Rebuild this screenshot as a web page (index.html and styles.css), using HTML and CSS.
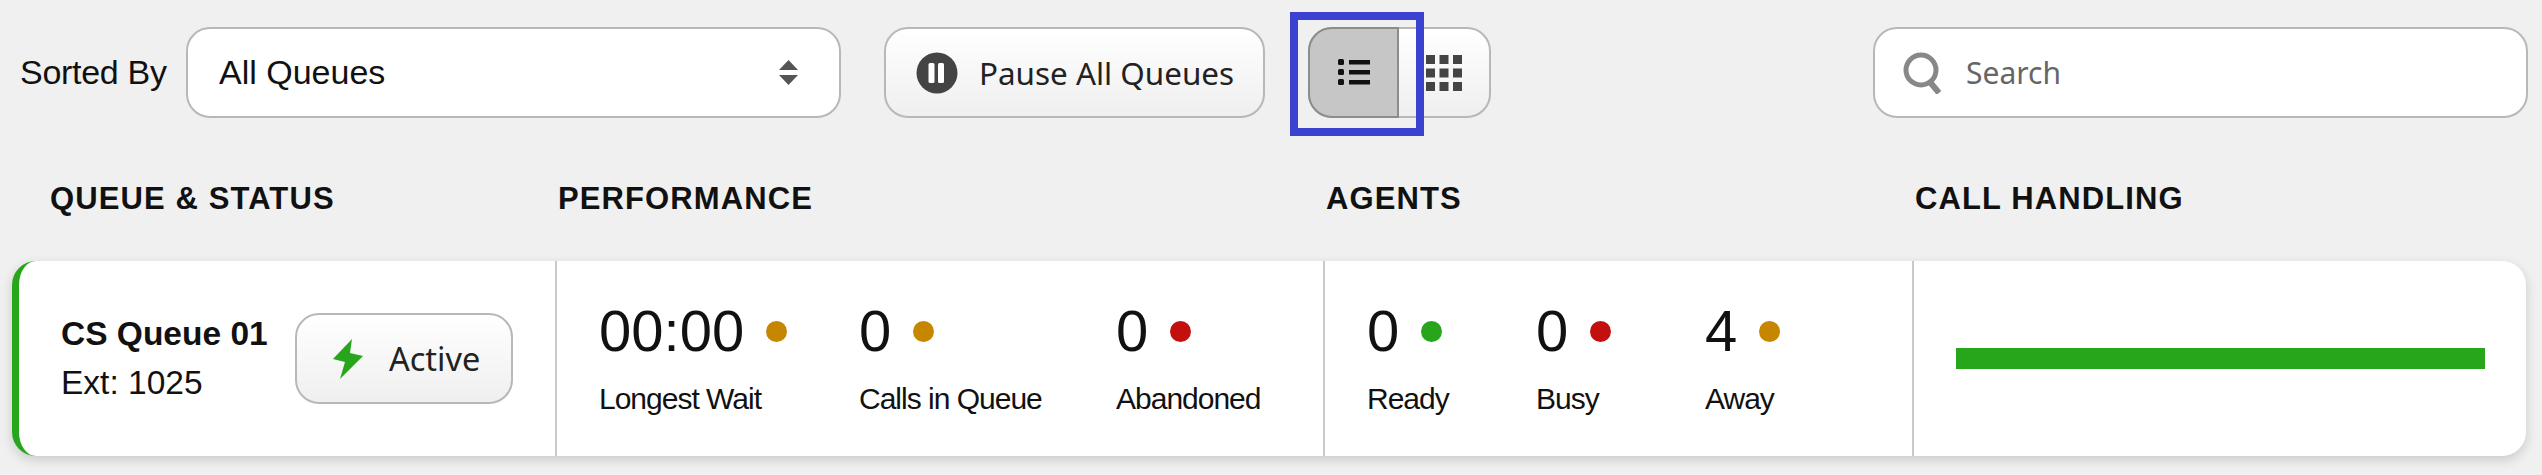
FILE: index.html
```html
<!DOCTYPE html>
<html lang="en">
<head>
<meta charset="utf-8">
<title>Queues</title>
<link rel="stylesheet" href="styles.css">
</head>
<body>
<div class="page">
  <div class="toolbar">
    <span class="sort-label">Sorted By</span>
    <div class="select">
      <span>All Queues</span>
      <svg class="updown" viewBox="0 0 19 25" width="19" height="25"><path d="M9.5 0 19 10H0Z" fill="#555"/><path d="M0 15H19L9.5 25Z" fill="#555"/></svg>
    </div>
    <button class="btn pause">
      <svg viewBox="0 0 42 42" width="42" height="42"><circle cx="21" cy="21" r="20.5" fill="#444"/><rect x="12.5" y="11" width="6" height="20" rx="1.5" fill="#fff"/><rect x="22" y="11" width="6" height="20" rx="1.5" fill="#fff"/></svg>
      <span>Pause All Queues</span>
    </button>
    <div class="toggle">
      <div class="seg seg-on">
        <svg viewBox="0 0 32 32" width="32" height="32"><g fill="#111"><rect x="0" y="2" width="6" height="6" rx="1.5"/><rect x="0" y="12" width="6" height="6" rx="1.5"/><rect x="0" y="22" width="6" height="6" rx="1.5"/><rect x="11" y="3" width="21" height="4.5"/><rect x="11" y="13" width="21" height="4.5"/><rect x="11" y="23" width="21" height="4.5"/></g></svg>
      </div>
      <div class="seg">
        <svg viewBox="0 0 36 36" width="36" height="36"><g fill="#444"><rect x="0" y="0" width="9" height="9"/><rect x="13.5" y="0" width="9" height="9"/><rect x="27" y="0" width="9" height="9"/><rect x="0" y="13.5" width="9" height="9"/><rect x="13.5" y="13.5" width="9" height="9"/><rect x="27" y="13.5" width="9" height="9"/><rect x="0" y="27" width="9" height="9"/><rect x="13.5" y="27" width="9" height="9"/><rect x="27" y="27" width="9" height="9"/></g></svg>
      </div>
      <div class="highlight"></div>
    </div>
    <div class="search">
      <svg viewBox="0 0 42 42" width="42" height="42"><circle cx="19" cy="18" r="15" fill="none" stroke="#888" stroke-width="5"/><path d="M28 30 37 41" stroke="#888" stroke-width="6" fill="none"/></svg>
      <span>Search</span>
    </div>
  </div>

  <div class="columns">
    <div class="col-head">QUEUE &amp; STATUS</div>
    <div class="col-head">PERFORMANCE</div>
    <div class="col-head">AGENTS</div>
    <div class="col-head">CALL HANDLING</div>
  </div>

  <div class="card columns">
    <div class="cell cell-queue">
      <div class="queue-name">
        <div class="name">CS Queue 01</div>
        <div class="ext">Ext: 1025</div>
      </div>
      <button class="btn active">
        <svg viewBox="0 0 30 40" width="30" height="40"><path d="M19 0 0 20 12 23 7 40 30 17 17 14Z" fill="#27a61c"/></svg>
        <span>Active</span>
      </button>
    </div>
    <div class="cell cell-perf">
      <div class="metric m-wait"><div class="val">00:00<i class="dot amber"></i></div><div class="lbl">Longest Wait</div></div>
      <div class="metric m-calls"><div class="val">0<i class="dot amber"></i></div><div class="lbl">Calls in Queue</div></div>
      <div class="metric"><div class="val">0<i class="dot red"></i></div><div class="lbl">Abandoned</div></div>
    </div>
    <div class="cell cell-agents">
      <div class="metric m-agent"><div class="val">0<i class="dot green"></i></div><div class="lbl">Ready</div></div>
      <div class="metric m-agent"><div class="val">0<i class="dot red"></i></div><div class="lbl">Busy</div></div>
      <div class="metric"><div class="val">4<i class="dot amber"></i></div><div class="lbl">Away</div></div>
    </div>
    <div class="cell cell-bar"><div class="bar"></div></div>
  </div>
</div>
</body>
</html>
```
FILE: styles.css
```css
* { box-sizing: border-box; }
html, body { margin: 0; height: 100%; }
body { background: #f0f0f0; font-family: "Liberation Sans", Arial, sans-serif; color: #111; overflow: hidden; }
.page { width: 2542px; height: 475px; padding: 27px 15px 0 12px; }

.toolbar { display: flex; align-items: center; height: 91px; padding-left: 8px; }
.sort-label { font-size: 34px; width: 166px; flex: none; letter-spacing: -0.3px; }
.select { width: 655px; height: 91px; flex: none; background: #fff; border: 2px solid #b8b8b8; border-radius: 24px; display: flex; align-items: center; justify-content: space-between; padding: 0 41px 0 31px; font-size: 34px; }
.btn { border: 2px solid #b8b8b8; background: linear-gradient(#fff, #efefef); color: #222; display: flex; align-items: center; font-family: "Noto Sans", sans-serif; padding: 0; }
.pause { width: 381px; height: 91px; flex: none; margin-left: 43px; border-radius: 24px; font-size: 31.4px; padding-left: 30px; gap: 21px; }
.toggle { position: relative; display: flex; width: 183px; height: 91px; flex: none; margin-left: 43px; border: 2px solid #b8b8b8; border-radius: 24px; background: linear-gradient(#fff, #efefef); }
.seg { flex: 1; display: flex; align-items: center; justify-content: center; }
.seg-on { flex: none; width: 91px; margin: -2px 0 -2px -2px; background: #c6c6c6; border: 2px solid #8c8c8c; border-radius: 24px 0 0 24px; }
.highlight { position: absolute; left: -20px; top: -17px; width: 134px; height: 124px; border: 8px solid #3a42cf; }
.search { width: 655px; height: 91px; flex: none; margin-left: 382px; background: #fff; border: 2px solid #b8b8b8; border-radius: 24px; display: flex; align-items: center; padding-left: 27px; gap: 22px; font-family: "Noto Sans", sans-serif; font-size: 30px; color: #666; }

.columns { display: grid; grid-template-columns: 545px 768px 589px 1fr; }
.col-head { font-weight: 700; font-size: 31px; letter-spacing: 1.1px; color: #111; height: 143px; padding: 65px 0 0 1px; line-height: 32px; }
.col-head:first-child { padding-left: 38px; }

.card { height: 195px; background: #fff; border-left: 7px solid #27a61c; border-radius: 24px; box-shadow: 0 4px 12px rgba(0,0,0,.16); margin-right: 1px; grid-template-columns: 538px 768px 589px 1fr; }
.cell { display: flex; align-items: center; border-right: 2px solid #c9c9c9; }
.cell:last-child { border-right: 0; }
.cell-queue { padding-left: 42px; }
.queue-name { width: 234px; flex: none; font-size: 33.5px; }
.name { font-weight: 700; line-height: 40px; margin-bottom: 9px; }
.ext { line-height: 40px; }
.active { width: 218px; height: 91px; border-radius: 24px; font-size: 32.5px; padding-left: 36px; gap: 26px; }
.cell-perf, .cell-agents { padding-left: 42px; align-items: flex-start; padding-top: 37px; }
.metric { flex: none; }
.m-wait { width: 260px; }
.m-calls { width: 257px; }
.m-agent { width: 169px; }
.val { font-size: 58px; line-height: 66px; display: flex; align-items: center; }
.dot { width: 21px; height: 21px; border-radius: 50%; margin-left: 22px; }
.amber { background: #c78600; }
.red { background: #c40f0f; }
.green { background: #27a61c; }
.lbl { font-size: 30px; letter-spacing: -1px; line-height: 36px; margin-top: 17px; }
.cell-bar { padding: 0 41px 0 42px; }
.bar { width: 100%; height: 21px; background: #27a61c; }
```
